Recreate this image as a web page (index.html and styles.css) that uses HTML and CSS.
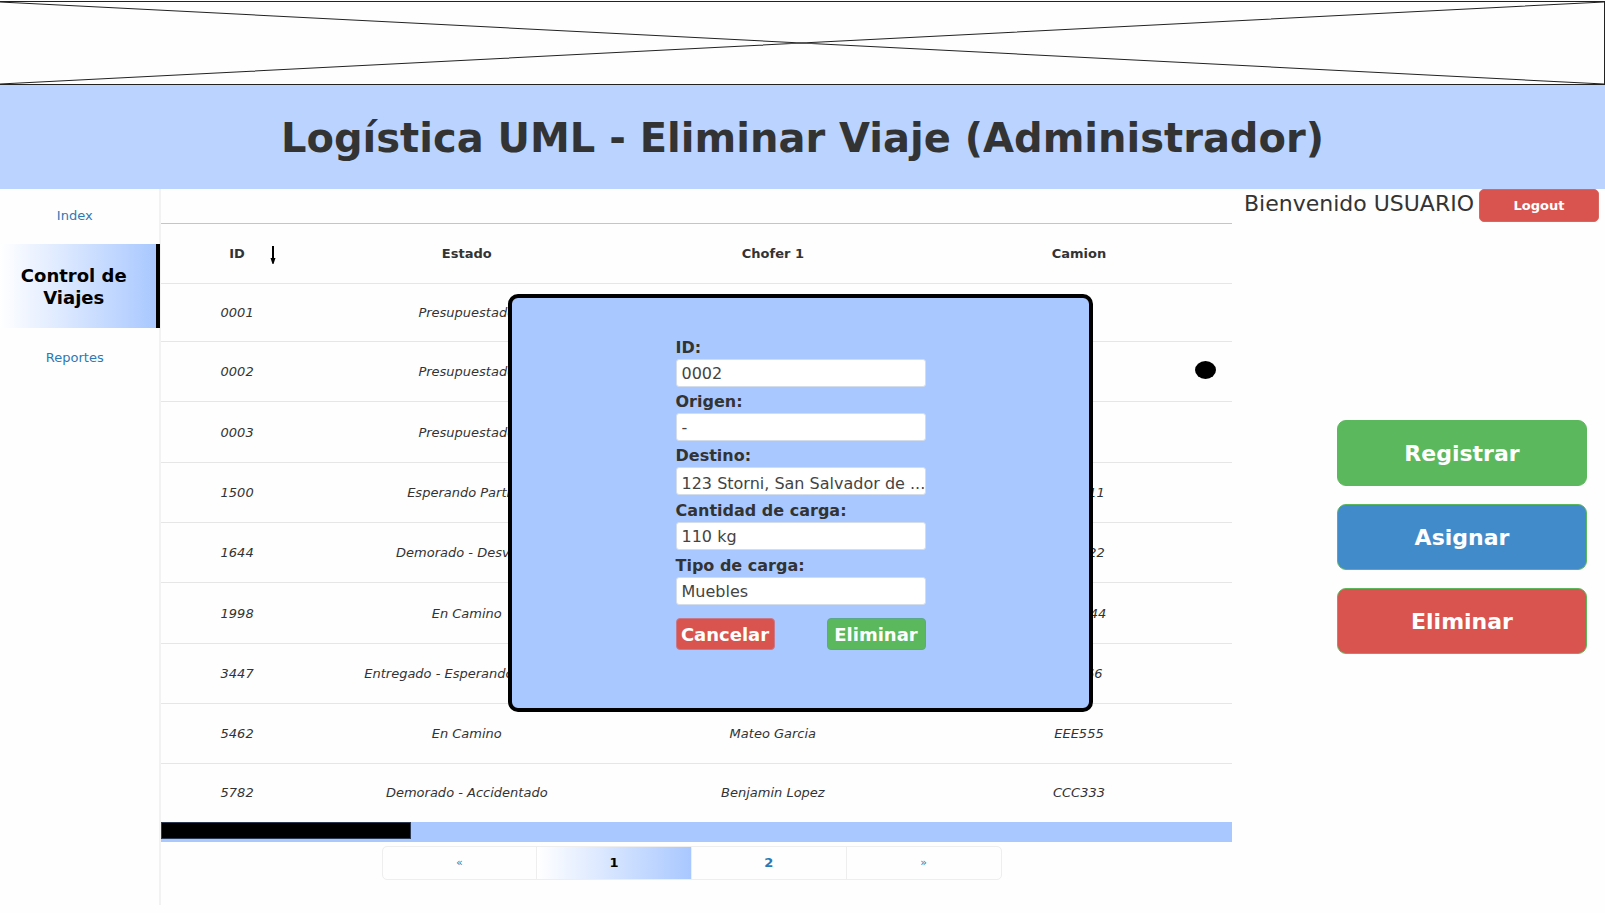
FILE: index.html
```html
<!DOCTYPE html>
<html lang="es">
<head>
<meta charset="utf-8">
<meta name="viewport" content="width=device-width, initial-scale=1">
<title>Logística UML - Eliminar Viaje</title>
<link rel="stylesheet" href="styles.css">
</head>
<body>
<svg class="banner" viewBox="0 0 100 100" preserveAspectRatio="none" aria-hidden="true">
  <path d="M0 0L100 100M0 100L100 0" />
</svg>
<header class="title-bar"><h1>Logística UML - Eliminar Viaje (Administrador)</h1></header>

<div class="layout">
  <nav class="sidebar">
    <a class="nav-link" href="#">Index</a>
    <a class="nav-link nav-active" href="#">Control de Viajes</a>
    <a class="nav-link" href="#">Reportes</a>
  </nav>

  <main class="content">
    <table class="trips">
      <thead>
        <tr>
          <th class="col-id"><span class="sort">ID
            <svg class="sort-icon" viewBox="0 0 6 18" aria-hidden="true"><path d="M2 0h2v12h1.500L3.500 18h-1L.5 12H2z"/></svg></span></th>
          <th>Estado</th><th>Chofer 1</th><th>Camion</th>
        </tr>
      </thead>
      <tbody>
        <tr><td>0001</td><td>Presupuestado</td><td></td><td></td></tr>
        <tr><td>0002</td><td>Presupuestado</td><td></td><td class="picked"><span class="dot"></span></td></tr>
        <tr><td>0003</td><td>Presupuestado</td><td></td><td></td></tr>
        <tr><td>1500</td><td>Esperando Partida</td><td></td><td>AAA111</td></tr>
        <tr><td>1644</td><td>Demorado - Desviado</td><td></td><td>BBB222</td></tr>
        <tr><td>1998</td><td>En Camino</td><td></td><td>DDD444</td></tr>
        <tr><td>3447</td><td>Entregado - Esperando Retorno</td><td></td><td>FFF666</td></tr>
        <tr><td>5462</td><td>En Camino</td><td>Mateo Garcia</td><td>EEE555</td></tr>
        <tr><td>5782</td><td>Demorado - Accidentado</td><td>Benjamin Lopez</td><td>CCC333</td></tr>
      </tbody>
    </table>
    <div class="scrollbar"><div class="thumb"></div></div>
    <nav class="pages">
      <a class="page page-arrow" href="#">«</a>
      <a class="page page-active" href="#">1</a>
      <a class="page" href="#">2</a>
      <a class="page page-arrow" href="#">»</a>
    </nav>
  </main>

  <aside class="side">
    <div class="user">
      <span class="welcome">Bienvenido USUARIO</span>
      <button class="logout" type="button">Logout</button>
    </div>
    <div class="actions">
      <button class="action" type="button">Registrar</button>
      <button class="action action-blue" type="button">Asignar</button>
      <button class="action action-red" type="button">Eliminar</button>
    </div>
  </aside>

  <form class="modal">
    <div class="fields">
      <label for="id">ID:</label>
      <input id="id" type="text" value="0002">
      <label for="origen">Origen:</label>
      <input id="origen" type="text" value="-">
      <label for="destino">Destino:</label>
      <input id="destino" class="low" type="text" value="123 Storni, San Salvador de ...">
      <label for="cantidad">Cantidad de carga:</label>
      <input id="cantidad" type="text" value="110 kg">
      <label for="tipo">Tipo de carga:</label>
      <input id="tipo" type="text" value="Muebles">
      <div class="modal-buttons">
        <button class="cancel" type="button">Cancelar</button>
        <button class="confirm" type="button">Eliminar</button>
      </div>
    </div>
  </form>
</div>
</body>
</html>
```
FILE: styles.css
```css
* { box-sizing: border-box; }

body {
  margin: 0;
  background: #fefefe;
  color: #333;
  font: 13px "DejaVu Sans", Verdana, sans-serif;
}

a { color: #2a7ab5; text-decoration: none; }

button { margin: 0; padding: 0; color: #fff; font-family: inherit; font-weight: bold; }

.banner {
  display: block;
  width: 100%;
  height: 84px;
  margin-top: 1px;
  border: 1px solid #222;
  border-left: 0;
}
.banner path { fill: none; stroke: #222; stroke-width: 1; vector-effect: non-scaling-stroke; }

.title-bar {
  display: flex;
  align-items: center;
  justify-content: center;
  height: 104px;
  padding-top: 2px;
  background: #bad3ff;
}
.title-bar h1 { margin: 0; font-size: 40px; line-height: 48px; }

.layout {
  position: relative;
  display: grid;
  grid-template-columns: 10% 1fr 373px;
}

/* Navigation */
.sidebar { border-right: 2px solid #f2f2f2; }
.nav-link {
  display: flex;
  align-items: center;
  justify-content: center;
  height: 55px;
  padding: 0 9px 2px 0;
  text-align: center;
}
.nav-active {
  height: 84px;
  margin-right: -1px;
  padding: 2px 16px 0 8px;
  border-right: 4px solid #000;
  background: linear-gradient(90deg, #fff, #a9c8ff);
  color: #000;
  font-size: 18px;
  font-weight: bold;
  line-height: 22px;
}
.nav-active + .nav-link { height: 60px; }

/* Trips table */
.content { padding: 34px 0 25px; }
.trips {
  width: 100%;
  border-collapse: collapse;
  border-top: 1px solid #a9c8ff;
  table-layout: fixed;
  text-align: center;
}
.trips th, .trips td { height: 60px; padding: 0; border-bottom: 1px solid #e6e6e6; }
.trips tbody tr:first-child td { height: 58px; }
.trips tbody tr:nth-child(3n) td { height: 61px; }
.trips tbody tr:last-child td { height: 58px; border-bottom: 0; }
.trips td { font-style: italic; }
.col-id { width: 14.3%; }
.sort { position: relative; }
.sort-icon { position: absolute; top: 0; left: 41px; width: 6px; height: 18px; }
.picked { position: relative; }
.dot {
  position: absolute;
  top: 19px;
  right: 16px;
  width: 21px;
  height: 18px;
  border-radius: 50%;
  background: #000;
}

.scrollbar { height: 20px; background: #a9c8ff; }
.thumb { width: 250px; height: 17px; border: 1px solid #2b3a50; background: #000; }

.pages {
  display: flex;
  width: 620px;
  height: 34px;
  margin: 4px auto 0 221px;
  border: 1px solid #eee;
  border-radius: 5px;
}
.page {
  flex: 1;
  display: flex;
  align-items: center;
  justify-content: center;
  border-left: 1px solid #eee;
  font-weight: bold;
}
.page:first-child { border-left: 0; }
.page-arrow { font-size: 11px; font-weight: normal; }
.page-active { background: linear-gradient(90deg, #fff, #a9c8ff); color: #000; }

/* User and actions */
.user { display: flex; justify-content: flex-end; gap: 5px; padding: 0 6px; white-space: nowrap; }
.welcome { font-size: 22px; line-height: 30px; }
.logout {
  width: 120px;
  height: 33px;
  border: 1px solid #d9675f;
  border-radius: 5px;
  background: #d9534f;
  font-size: 13px;
}
.actions {
  display: flex;
  flex-direction: column;
  align-items: flex-end;
  gap: 18px;
  padding: 198px 18px 0 0;
}
.action {
  width: 250px;
  height: 66px;
  border: 1px solid #5cb85c;
  border-radius: 9px;
  background: #5cb85c;
  font-size: 22px;
}
.action-blue { background: #428bca; }
.action-red { background: #d9534f; }

/* Delete dialog */
.modal {
  position: absolute;
  top: 105px;
  left: calc(50% - 295px);
  width: 585px;
  height: 418px;
  padding: 35px 163px 0 164px;
  border: 4px solid #000;
  border-radius: 10px;
  background: #a9c8ff;
  font-size: 16px;
}
.fields { display: flex; flex-direction: column; }
.fields label { margin-top: 3px; font-weight: bold; line-height: 23px; }
.fields input {
  width: 100%;
  height: 28px;
  padding: 0 0 0 5px;
  border: 1px solid #d5dcea;
  border-radius: 3px;
  background: #fff;
  color: #444;
  font: inherit;
}
.fields .low { padding-top: 5px; }
.fields .low ~ label { margin-top: 4px; }
.modal-buttons { display: flex; justify-content: space-between; margin-top: 13px; }
.modal-buttons button { width: 99px; height: 32px; border-radius: 4px; font-size: 18px; }
.cancel { border: 1px solid #c77a8c; background: #d9534f; }
.confirm { border: 1px solid #5ba88c; background: #5cb85c; }
```
